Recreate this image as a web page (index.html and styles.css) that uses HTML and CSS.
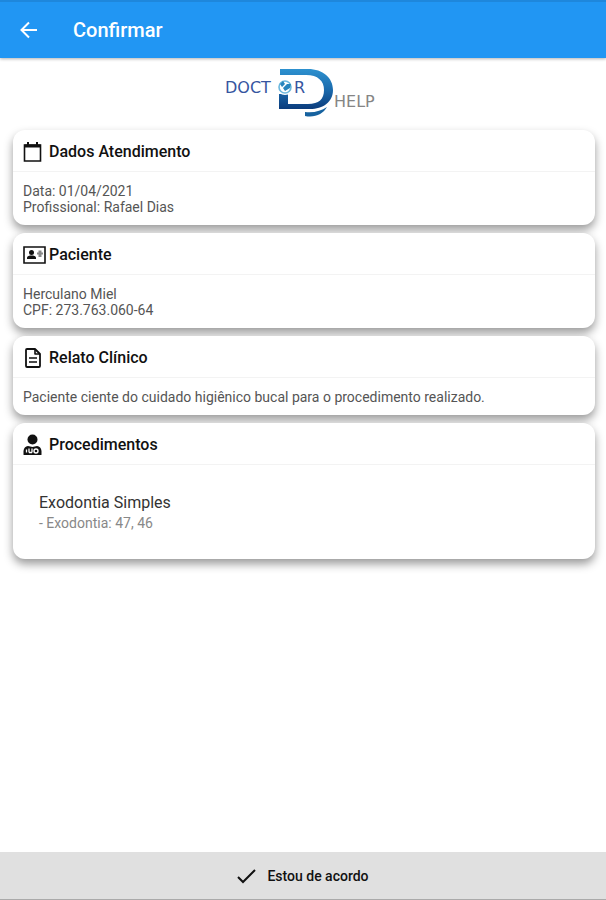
FILE: index.html
```html
<!DOCTYPE html>
<html lang="pt-BR">
<head>
  <meta charset="UTF-8" />
  <meta name="viewport" content="width=device-width, initial-scale=1.0" />
  <title>Confirmar</title>
  <link rel="stylesheet" href="styles.css">
</head>
<body>
  <header class="app-bar">
    <button class="back-btn" type="button" aria-label="Voltar">
      <svg width="20" height="20" viewBox="0 0 20 20" fill="none" stroke="currentColor" stroke-width="2"><path d="M18 10H3M10 2.5L2.5 10L10 17.5"/></svg>
    </button>
    <h1 class="app-title">Confirmar</h1>
  </header>

  <main class="content">
    <svg class="logo" width="164" height="52" viewBox="0 0 164 52" role="img" aria-label="Doctor Help">
      <defs>
        <linearGradient id="logoBlue" x1="0" y1="0" x2="0" y2="1">
          <stop offset="0" stop-color="#2d91cf"/>
          <stop offset="0.5" stop-color="#1b6cae"/>
          <stop offset="1" stop-color="#0b3c7c"/>
        </linearGradient>
      </defs>
      <path fill="url(#logoBlue)" d="M58 3H86C101 3 111 12 111 24C111 36 101 43 88 43H57V28H66V38H86C97 38 102 33 102 24C102 15 96 9 84 9H58Z"/>
      <path fill="#16629f" d="M83 46C92 47 99 45 105 41C101 48 93 52 83 50Z"/>
      <circle cx="63" cy="21" r="8" fill="#fff"/>
      <circle cx="63" cy="21" r="6" fill="none" stroke="#6bb8de" stroke-width="1.6"/>
      <path fill="#2684bd" d="M58 18L61 15L63 18L60 21ZM61 22L65 18L69 18L68 22L63 25Z"/>
      <text class="logo-doctor" x="3" y="27">DOCT</text>
      <text class="logo-doctor" x="72" y="27">R</text>
      <text class="logo-help" x="112" y="41">HELP</text>
    </svg>

    <section class="card">
      <h2 class="card-header">
        <svg class="card-icon" width="20" height="22" viewBox="0 0 20 22" fill="none" stroke="currentColor"><path stroke-width="1.6" d="M1.500 4H17.500V20H1.500Z"/><path stroke-width="3" d="M1.500 5H17.500"/><path stroke-width="2" d="M5 1V5M14 1V5"/></svg>
        Dados Atendimento
      </h2>
      <p class="card-body">Data: 01/04/2021<br>Profissional: Rafael Dias</p>
    </section>

    <section class="card">
      <h2 class="card-header">
        <svg class="card-icon wide" width="24" height="20" viewBox="0 0 24 20"><path fill="none" stroke="currentColor" stroke-width="1.6" d="M1 2H22V18H1Z"/><circle cx="8.5" cy="7.5" r="2.5" fill="currentColor"/><path fill="currentColor" d="M4 14V13C4 11 6.500 10.500 8.500 10.500S13 11 13 13V14Z"/><path fill="#888" d="M15.500 5.500H18.500V7.500H20V9.500H18.500V12H15.500V9.500H14V7.500H15.500Z"/></svg>
        Paciente
      </h2>
      <p class="card-body">Herculano Miel<br>CPF: 273.763.060-64</p>
    </section>

    <section class="card">
      <h2 class="card-header">
        <svg class="card-icon" width="20" height="22" viewBox="0 0 20 22" fill="none" stroke="currentColor" stroke-width="1.8" stroke-linejoin="round"><path d="M4 2H12L17 7V19Q17 20 16 20H4Q3 20 3 19V3Q3 2 4 2Z"/><path d="M12 2V7H17M6 11H14M6 15H14" stroke-width="1.6"/></svg>
        Relato Clínico
      </h2>
      <p class="card-body">Paciente ciente do cuidado higiênico bucal para o procedimento realizado.</p>
    </section>

    <section class="card">
      <h2 class="card-header">
        <svg class="card-icon" width="20" height="22" viewBox="0 0 20 22"><circle cx="9.5" cy="5.5" r="5" fill="currentColor"/><path fill="currentColor" d="M0.500 20.500V17Q1 12.500 5 12L9.500 13L14 12Q18 12.500 18.500 17V20.500Q18.500 21 18 21H1Q0.500 21 0.500 20.500Z"/><path fill="none" stroke="#fff" stroke-width="1.3" d="M3.500 15.500V18.500M6 14.500V18.500M9 14.500V18.500M6 18.500H9"/><circle cx="13" cy="17" r="2" fill="none" stroke="#fff" stroke-width="1.4"/></svg>
        Procedimentos
      </h2>
      <div class="procedure">
        <h3 class="procedure-name">Exodontia Simples</h3>
        <p class="procedure-detail">- Exodontia: 47, 46</p>
      </div>
    </section>
  </main>

  <button class="agree-btn" type="button">
    <svg width="20" height="16" viewBox="0 0 20 16" fill="none" stroke="currentColor" stroke-width="2"><path d="M1 9L6 14L18 2"/></svg>
    Estou de acordo
  </button>
</body>
</html>
```

FILE: styles.css
```css
* {
  box-sizing: border-box;
}

body {
  margin: 0;
  min-height: 100vh;
  display: flex;
  flex-direction: column;
  background-color: #fff;
  color: #111;
  font-family: Roboto, 'Liberation Sans', sans-serif;
}

h1, h2, h3, p {
  margin: 0;
}

button {
  border: 0;
  font-family: inherit;
  cursor: pointer;
}

.app-bar {
  display: flex;
  align-items: center;
  gap: 34px;
  height: 58px;
  padding: 0 19px;
  background-color: #2196f3;
  border-top: 2px solid #1e87dc;
  color: #fff;
  box-shadow: 0 1px 3px rgba(0, 0, 0, 0.3);
}

.back-btn {
  display: flex;
  padding: 0;
  background: none;
  color: #fff;
}

.app-title {
  font-size: 20px;
  font-weight: 500;
}

.content {
  flex: 1;
  display: flex;
  flex-direction: column;
  gap: 8px;
  padding: 8px 11px 24px 13px;
}

.logo {
  align-self: center;
  margin-bottom: 4px;
}

.logo-doctor,
.logo-help {
  font-family: 'DejaVu Sans', 'Liberation Sans', sans-serif;
  font-size: 16px;
  fill: #3655a0;
}

.logo-help {
  fill: #858585;
}

.card {
  background-color: #fff;
  border-radius: 12px;
  box-shadow: 0 5px 10px rgba(0, 0, 0, 0.4);
}

.card-header {
  display: flex;
  align-items: center;
  gap: 6px;
  height: 42px;
  padding: 2px 10px 0;
  border-bottom: 1px solid #f3f3f3;
  font-size: 16px;
  font-weight: 500;
}

.card-icon.wide {
  margin-right: -4px;
}

.card-body {
  padding: 11px 10px 10px;
  color: #555;
  font-size: 14px;
  line-height: 16px;
}

.procedure {
  padding: 27px 26px 26px;
}

.procedure-name {
  color: #333;
  font-size: 16px;
  font-weight: 400;
  line-height: 22px;
}

.procedure-detail {
  color: #888;
  font-size: 14px;
  line-height: 19px;
}

.agree-btn {
  display: flex;
  align-items: center;
  justify-content: center;
  gap: 10px;
  height: 48px;
  background-color: #e0e0e0;
  border-bottom: 1px solid #aaa;
  color: #111;
  font-size: 14px;
  font-weight: 500;
}
```
